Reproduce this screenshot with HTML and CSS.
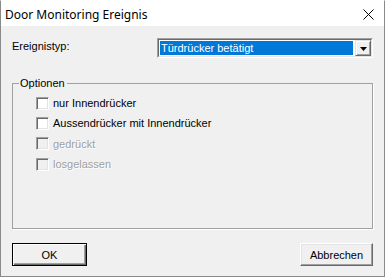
FILE: index.html
```html
<!DOCTYPE html>
<html>
<head>
<meta charset="utf-8">
<link rel="stylesheet" href="styles.css">
</head>
<body>
<div class="window">
  <div class="titlebar">
    <span class="title">Door Monitoring Ereignis</span>
    <span class="close">
      <svg width="11" height="11" viewBox="0 0 11 11"><path d="M0.5 0.5 L10.5 10.5 M10.5 0.5 L0.5 10.5" stroke="#000" stroke-width="1" fill="none"/></svg>
    </span>
  </div>
  <div class="content">
    <div class="row">
      <span class="label">Ereignistyp:</span>
      <div class="combo">
        <div class="combo-inner">
          <span class="combo-value">Türdrücker betätigt</span>
          <span class="combo-btn">
            <svg width="7" height="4" viewBox="0 0 7 4"><path d="M0 0 H7 L3.5 4 Z" fill="#000"/></svg>
          </span>
        </div>
      </div>
    </div>
    <fieldset class="group">
      <legend>Optionen</legend>
      <label class="check"><span class="box"></span><span>nur Innendrücker</span></label>
      <label class="check"><span class="box"></span><span>Aussendrücker mit Innendrücker</span></label>
      <label class="check disabled"><span class="box"></span><span>gedrückt</span></label>
      <label class="check disabled"><span class="box"></span><span>losgelassen</span></label>
    </fieldset>
    <div class="buttons">
      <button class="btn default">OK</button>
      <button class="btn cancel">Abbrechen</button>
    </div>
  </div>
</div>
</body>
</html>
```

FILE: styles.css
```css
html, body {
  margin: 0;
  padding: 0;
  background: #f0f0f0;
}
.window {
  width: 385px;
  height: 277px;
  box-sizing: border-box;
  border: 1px solid #8a8a8a;
  border-top-color: #ffffff;
  background: #f0f0f0;
  display: flex;
  flex-direction: column;
  font-family: "Liberation Sans", Arial, sans-serif;
  font-size: 11px;
  color: #000;
}
.titlebar {
  height: 25px;
  background: #fff;
  display: flex;
  align-items: center;
  padding: 0 10px 0 4px;
}
.title {
  font-family: "Noto Sans", sans-serif;
  font-size: 12px;
  margin-top: 1px;
}
.close {
  margin-left: auto;
  display: flex;
  margin-top: 2px;
}
.content {
  flex: 1;
  display: flex;
  flex-direction: column;
  padding: 12px 11px 0 11px;
}
.row {
  display: grid;
  grid-template-columns: 145px 216px;
  align-items: start;
}
.label {
  padding-top: 2px;
}
.combo {
  height: 20px;
  box-sizing: border-box;
  border: 1px solid;
  border-color: #a0a0a0 #fff #fff #a0a0a0;
}
.combo-inner {
  height: 100%;
  box-sizing: border-box;
  border: 1px solid;
  border-color: #696969 #e3e3e3 #e3e3e3 #696969;
  background: #fff;
  display: flex;
  align-items: stretch;
  padding: 0 0 0 1px;
}
.combo-value {
  flex: 1;
  background: #0078d7;
  color: #fff;
  margin: 1px 2px 1px 0;
  padding-left: 1px;
  line-height: 14px;
  font-size: 11px;
}
.combo-btn {
  width: 16px;
  box-sizing: border-box;
  border: 1px solid;
  border-color: #e3e3e3 #696969 #696969 #e3e3e3;
  box-shadow: inset 1px 1px 0 #fff, inset -1px -1px 0 #a0a0a0;
  background: #f0f0f0;
  display: flex;
  align-items: center;
  justify-content: center;
  padding-top: 1px;
}
.group {
  margin: 19px 0 0 0;
  height: 152px;
  box-sizing: border-box;
  border: 1px solid #a0a0a0;
  box-shadow: 1px 1px 0 #fff;
  padding: 3px 6px 0 6px;
  min-width: 0;
  display: flex;
  flex-direction: column;
}
.group legend {
  padding: 0 2px 0 1px;
  line-height: 13px;
}
.check {
  display: flex;
  align-items: center;
  height: 20.33px;
  margin-left: 17px;
  gap: 4px;
}
.check:first-of-type {
  margin-top: 0;
}
.box {
  width: 13px;
  height: 13px;
  box-sizing: border-box;
  border: 1px solid;
  border-color: #a0a0a0 #fff #fff #a0a0a0;
  box-shadow: inset 1px 1px 0 #696969, inset -1px -1px 0 #e3e3e3;
  background: #fff;
}
.check.disabled {
  color: #a0a0a0;
  text-shadow: 1px 1px 0 #fff;
}
.check.disabled .box {
  background: #f0f0f0;
}
.buttons {
  display: flex;
  justify-content: space-between;
  margin-top: 14px;
}
.btn {
  height: 23px;
  box-sizing: border-box;
  font-family: "Liberation Sans", Arial, sans-serif;
  font-size: 11px;
  color: #000;
  background: #f0f0f0;
  padding: 0;
  border: 1px solid;
  border-color: #fff #696969 #696969 #fff;
  box-shadow: inset -1px -1px 0 #a0a0a0, inset 1px 1px 0 #e3e3e3;
}
.btn.default {
  width: 75px;
  border: 1px solid #000;
  box-shadow: inset 1px 1px 0 #fff, inset -1px -1px 0 #696969, inset -2px -2px 0 #a0a0a0;
}
.btn.cancel {
  width: 73px;
}
```
